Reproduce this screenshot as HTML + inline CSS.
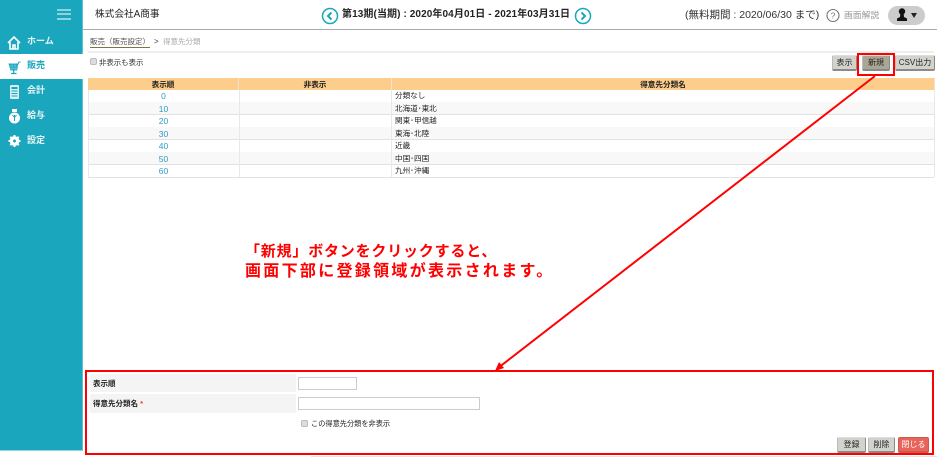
<!DOCTYPE html>
<html lang="ja">
<head>
<meta charset="utf-8">
<style>
html,body{margin:0;padding:0;width:937px;height:462px;overflow:hidden;background:#fff;}
body{position:relative;font-family:"Liberation Sans","Noto Sans CJK JP",sans-serif;color:#333;}
.a{position:absolute;white-space:nowrap;}
.nav{position:absolute;left:27px;font-size:9px;line-height:12px;color:#e8f6f8;font-weight:bold;white-space:nowrap;}
.hd{position:absolute;top:78px;height:12px;background:#fdcd8b;border-right:1px solid #f3e3cc;font-size:7.600px;line-height:13px;text-align:center;color:#222;font-weight:bold;}
.row{position:absolute;left:88px;width:846px;height:12px;border-bottom:1px solid #e2e2e2;}
.num{position:absolute;left:88px;width:151px;text-align:center;font-size:8.500px;line-height:12px;color:#2f9cc4;}
.nm{position:absolute;left:395px;font-size:7.600px;line-height:12px;color:#222;white-space:nowrap;}
.btn{position:absolute;box-sizing:border-box;height:16px;background:#d3d3ce;border-right:1px solid #8a8a8a;border-bottom:2px solid #8a8a8a;border-left:1px solid #bbb;border-top:1px solid #ddd;border-radius:2px;font-size:8px;line-height:13px;text-align:center;color:#222;white-space:nowrap;}
.cb{position:absolute;width:5px;height:5px;border:1px solid #bbb;background:#ddd;border-radius:2px;}
.red{position:absolute;box-sizing:border-box;border:2px solid #f00;}
</style>
</head>
<body>
<!-- sidebar -->
<div class="a" style="left:0;top:0;width:83px;height:450px;background:#1aa7bd;"></div>
<div class="a" style="left:82px;top:0;width:1px;height:450px;background:#5fc0cf;"></div>
<div class="a" style="left:0;top:450px;width:83px;height:1px;background:#8fd3dd;"></div>
<div class="a" style="left:0;top:54px;width:83px;height:25px;background:#fff;"></div>
<div class="a" style="left:57px;top:9px;width:14px;height:2px;background:#8fd3de;"></div>
<div class="a" style="left:57px;top:13px;width:14px;height:2px;background:#8fd3de;"></div>
<div class="a" style="left:57px;top:18px;width:14px;height:2px;background:#8fd3de;"></div>

<svg class="a" style="left:0;top:30px;" width="30" height="125" viewBox="0 0 30 125">
 <path d="M8 13 L14 7 L20 13 M10 12 V19 H18 V12 M13 19 V15 H15 V19" fill="none" stroke="#fff" stroke-width="1.600"/>
 <path d="M8.500 33.500 H18.500 L17 40.500 H10.500 Z" fill="#1aa7bd"/>
 <path d="M18 34 L19 32 H20.500" fill="none" stroke="#1aa7bd" stroke-width="1"/>
 <path d="M9 36 H18 M9.500 38.300 H18 M12 33.500 V40.500 M15 33.500 V40.500" stroke="#8fd3de" stroke-width=".5"/>
 <path d="M13.700 40.500 V43.500 M11 43.500 H16.500" fill="none" stroke="#1aa7bd" stroke-width="1.200"/>
 <rect x="10" y="55" width="9" height="14" rx="1" fill="#d7eff3"/>
 <rect x="11.500" y="57" width="6" height="2" fill="#1aa7bd"/>
 <path d="M11.500 61 H17.500 M11.500 63.500 H17.500 M11.500 66 H17.500" stroke="#1aa7bd" stroke-width="1"/>
 <circle cx="14.500" cy="88" r="5.500" fill="#fff"/>
 <rect x="12" y="79" width="5" height="3" fill="#fff"/>
 <path d="M14.500 85 V91 M12.500 85 L14.500 87.500 L16.500 85" stroke="#1aa7bd" stroke-width="1" fill="none"/>
 <circle cx="14.500" cy="111" r="3.600" fill="none" stroke="#fff" stroke-width="2.600"/>
 <path d="M14.500 105 V117 M8.500 111 H20.500 M10.300 106.800 L18.700 115.200 M18.700 106.800 L10.300 115.200" stroke="#fff" stroke-width="2"/>
 <circle cx="14.500" cy="111" r="1.500" fill="#1aa7bd"/>
</svg>
<div class="nav" style="top:35px;">ホーム</div>
<div class="nav" style="top:59px;color:#1aa7bd;">販売</div>
<div class="nav" style="top:84px;">会計</div>
<div class="nav" style="top:109px;">給与</div>
<div class="nav" style="top:134px;">設定</div>

<!-- header -->
<div class="a" style="left:83px;top:29px;width:854px;height:1px;background:#aaa;"></div>
<div class="a" style="left:95px;top:9px;font-size:9.700px;line-height:12px;color:#222;">株式会社A商事</div>
<svg class="a" style="left:321px;top:7px;" width="18" height="18" viewBox="0 0 18 18"><circle cx="9" cy="9" r="7.500" fill="#fff" stroke="#1aa7bd" stroke-width="1.500"/><path d="M10.500 5.500 L7 9 L10.500 12.500" fill="none" stroke="#1aa7bd" stroke-width="2"/></svg>
<svg class="a" style="left:574px;top:7px;" width="18" height="18" viewBox="0 0 18 18"><circle cx="9" cy="9" r="7.500" fill="#fff" stroke="#1aa7bd" stroke-width="1.500"/><path d="M7.500 5.500 L11 9 L7.500 12.500" fill="none" stroke="#1aa7bd" stroke-width="2"/></svg>
<div class="a" style="left:342px;top:9px;font-size:10px;letter-spacing:.1px;line-height:12px;color:#222;font-weight:bold;">第13期(当期) : 2020年04月01日 - 2021年03月31日</div>
<div class="a" style="left:685px;top:9px;font-size:10.500px;line-height:12px;color:#333;">(無料期間 : 2020/06/30 まで)</div>
<svg class="a" style="left:825px;top:8px;" width="16" height="16" viewBox="0 0 16 16"><circle cx="8" cy="7.500" r="6" fill="#fff" stroke="#777" stroke-width="1.100"/><text x="8" y="10.500" font-size="8.500" text-anchor="middle" fill="#777" font-family="Liberation Sans">?</text></svg>
<div class="a" style="left:844px;top:9px;font-size:8.800px;line-height:12px;color:#999;">画面解説</div>
<div class="a" style="left:888px;top:6px;width:37px;height:19px;border-radius:10px;background:#ccc;"></div>
<svg class="a" style="left:896px;top:8px;" width="24" height="15" viewBox="0 0 24 15"><circle cx="6" cy="3.500" r="3.200" fill="#111"/><path d="M4.300 6 H7.700 L8 9 L11 10.500 V13 H1 V10.500 L4 9 Z" fill="#111"/><path d="M15 5 H21 L18 10 Z" fill="#222"/></svg>

<!-- breadcrumb -->
<div class="a" style="left:90px;top:36px;font-size:7.500px;line-height:11px;color:#555;border-bottom:1px solid #7c7448;">販売（販売設定）</div>
<div class="a" style="left:154px;top:36px;font-size:8px;line-height:11px;color:#444;">&gt;</div>
<div class="a" style="left:163px;top:36px;font-size:7.500px;line-height:11px;color:#aaa;">得意先分類</div>
<div class="a" style="left:88px;top:51px;width:846px;height:2px;background:#eee;"></div>

<!-- toolbar -->
<div class="cb" style="left:90px;top:58px;"></div>
<div class="a" style="left:99px;top:57px;font-size:7.400px;line-height:12px;color:#333;">非表示も表示</div>
<div class="btn" style="left:832px;top:55px;width:25px;">表示</div>
<div class="btn" style="left:862px;top:55px;width:28px;background:#a9a793;">新規</div>
<div class="btn" style="left:895px;top:55px;width:40px;">CSV出力</div>

<!-- table -->
<div class="hd" style="left:88px;width:150px;">表示順</div>
<div class="hd" style="left:239px;width:152px;">非表示</div>
<div class="hd" style="left:392px;width:542px;">得意先分類名</div>
<div class="row" style="top:90px;"></div>
<div class="row" style="top:102px;background:#f8f8f8;"></div>
<div class="row" style="top:115px;"></div>
<div class="row" style="top:127px;background:#f8f8f8;"></div>
<div class="row" style="top:140px;"></div>
<div class="row" style="top:152px;background:#f8f8f8;"></div>
<div class="row" style="top:165px;"></div>
<div class="a" style="left:88px;top:90px;width:1px;height:87px;background:#e8e8e8;"></div>
<div class="a" style="left:239px;top:90px;width:1px;height:87px;background:#e8e8e8;"></div>
<div class="a" style="left:391px;top:90px;width:1px;height:87px;background:#e8e8e8;"></div>
<div class="a" style="left:934px;top:90px;width:1px;height:87px;background:#e8e8e8;"></div>
<div class="num" style="top:90px;">0</div><div class="nm" style="top:90px;">分類なし</div>
<div class="num" style="top:103px;">10</div><div class="nm" style="top:103px;">北海道･東北</div>
<div class="num" style="top:115px;">20</div><div class="nm" style="top:115px;">関東･甲信越</div>
<div class="num" style="top:128px;">30</div><div class="nm" style="top:128px;">東海･北陸</div>
<div class="num" style="top:140px;">40</div><div class="nm" style="top:140px;">近畿</div>
<div class="num" style="top:153px;">50</div><div class="nm" style="top:153px;">中国･四国</div>
<div class="num" style="top:165px;">60</div><div class="nm" style="top:165px;">九州･沖縄</div>

<!-- annotation text -->
<div class="a" style="left:245px;top:242px;font-size:15px;line-height:20px;color:#f00;font-weight:bold;letter-spacing:.8px;">「新規」ボタンをクリックすると、</div>
<div class="a" style="left:245px;top:262px;font-size:16px;line-height:20px;color:#f00;font-weight:bold;letter-spacing:2.300px;">画面下部に登録領域が表示されます。</div>

<!-- form -->
<div class="a" style="left:90px;top:374px;width:206px;height:18px;background:#f4f4f4;"></div>
<div class="a" style="left:90px;top:394px;width:206px;height:19px;background:#f4f4f4;"></div>
<div class="a" style="left:93px;top:378px;font-size:7.500px;line-height:11px;color:#222;font-weight:bold;">表示順</div>
<div class="a" style="left:93px;top:398px;font-size:7.500px;line-height:11px;color:#222;font-weight:bold;">得意先分類名 <span style="color:#f33;">*</span></div>
<div class="a" style="left:298px;top:377px;width:57px;height:11px;border:1px solid #ccc;background:#fff;"></div>
<div class="a" style="left:298px;top:397px;width:180px;height:11px;border:1px solid #ccc;background:#fff;"></div>
<div class="cb" style="left:301px;top:420px;"></div>
<div class="a" style="left:311px;top:418px;font-size:7.200px;line-height:11px;color:#222;">この得意先分類を非表示</div>
<div class="btn" style="left:837px;top:437px;width:29px;">登録</div>
<div class="btn" style="left:868px;top:437px;width:27px;">削除</div>
<div class="btn" style="left:898px;top:437px;width:31px;background:#e8645a;border-color:#c85a50;color:#fff;">閉じる</div>
<div class="a" style="left:311px;top:456px;width:626px;height:1px;background:#e3e3e3;"></div>

<!-- red annotations -->
<div class="red" style="left:85px;top:370px;width:849px;height:85px;"></div>
<div class="red" style="left:857px;top:53px;width:38px;height:23px;"></div>
<svg class="a" style="left:490px;top:70px;" width="390" height="305" viewBox="0 0 390 305"><path d="M385 6 L8 298" stroke="#f00" stroke-width="2" fill="none"/><path d="M5 301 L9 292 L14 298 Z" fill="#f00"/></svg>
</body>
</html>
